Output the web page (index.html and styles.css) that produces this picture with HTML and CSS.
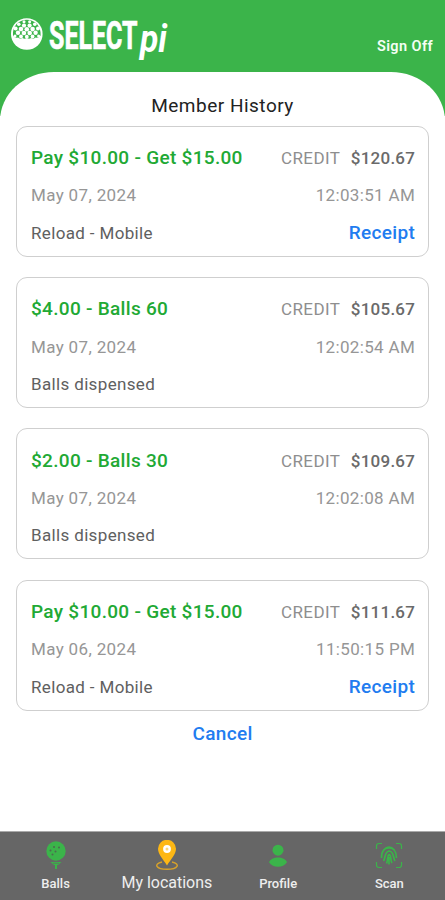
FILE: index.html
```html
<!DOCTYPE html>
<html lang="en">
<head>
<meta charset="utf-8">
<title>Member History</title>
<link rel="stylesheet" href="styles.css">
</head>
<body>
<div class="app">
  <header class="header">
    <svg class="logo" width="172" height="62" viewBox="8 4 172 62">
      <circle cx="26.800" cy="34" r="15.800" fill="#fff"/>
      <path d="M13 35.500C12.300 26 18.500 19.700 26.800 19.700S41.300 26 40.600 35.500q-2 3-5 2-2 2-4.500.5-2 1.500-4.300 0-2.300 1.500-4.300 0-2.500 1.500-4.500-.5-3 1-5-2z" fill="#3bb44a"/>
      <g fill="#fff">
        <circle cx="24" cy="21.800" r="1.500"/><circle cx="29.600" cy="21.800" r="1.500"/>
        <circle cx="18.800" cy="24.300" r="1.800"/><circle cx="34.800" cy="24.300" r="1.800"/>
        <circle cx="24" cy="25.600" r="2.100"/><circle cx="29.600" cy="25.600" r="2.100"/>
        <circle cx="15.600" cy="28.600" r="2"/><circle cx="21" cy="29.100" r="2.300"/><circle cx="26.800" cy="29.300" r="2.300"/><circle cx="32.600" cy="29.100" r="2.300"/><circle cx="38" cy="28.600" r="2"/>
        <circle cx="18" cy="32.700" r="2.200"/><circle cx="23.900" cy="33" r="2.300"/><circle cx="29.700" cy="33" r="2.300"/><circle cx="35.600" cy="32.700" r="2.200"/>
        <circle cx="15" cy="36" r="1.500"/><circle cx="21" cy="36.500" r="1.900"/><circle cx="26.800" cy="36.700" r="1.900"/><circle cx="32.600" cy="36.500" r="1.900"/><circle cx="38.600" cy="36" r="1.500"/>
      </g>
      <text class="logo-main" x="49" y="49" textLength="88.500" lengthAdjust="spacingAndGlyphs">SELECT</text>
      <text class="logo-pi" x="140" y="52" textLength="27" lengthAdjust="spacingAndGlyphs">pi</text>
    </svg>
    <a class="signoff">Sign Off</a>
  </header>
  <main class="sheet">
    <h1 class="title">Member History</h1>
    <div class="list">
      <section class="card">
        <div class="row"><span class="name">Pay $10.00 - Get $15.00</span><span class="credit">CREDIT <b class="amount">$120.67</b></span></div>
        <div class="row"><span class="date">May 07, 2024</span><span class="time">12:03:51 AM</span></div>
        <div class="row"><span class="kind">Reload - Mobile</span><a class="link">Receipt</a></div>
      </section>
      <section class="card">
        <div class="row"><span class="name">$4.00 - Balls 60</span><span class="credit">CREDIT <b class="amount">$105.67</b></span></div>
        <div class="row"><span class="date">May 07, 2024</span><span class="time">12:02:54 AM</span></div>
        <div class="row"><span class="kind">Balls dispensed</span></div>
      </section>
      <section class="card">
        <div class="row"><span class="name">$2.00 - Balls 30</span><span class="credit">CREDIT <b class="amount">$109.67</b></span></div>
        <div class="row"><span class="date">May 07, 2024</span><span class="time">12:02:08 AM</span></div>
        <div class="row"><span class="kind">Balls dispensed</span></div>
      </section>
      <section class="card">
        <div class="row"><span class="name">Pay $10.00 - Get $15.00</span><span class="credit">CREDIT <b class="amount">$111.67</b></span></div>
        <div class="row"><span class="date">May 06, 2024</span><span class="time">11:50:15 PM</span></div>
        <div class="row"><span class="kind">Reload - Mobile</span><a class="link">Receipt</a></div>
      </section>
    </div>
    <a class="link cancel">Cancel</a>
  </main>
  <nav class="tabs">
    <a class="tab">
      <svg width="32" height="32" viewBox="0 0 32 32">
        <circle cx="16" cy="11" r="9.700" fill="#3bb44a"/>
        <g fill="#4c6b4f"><circle cx="14" cy="7" r="1"/><circle cx="19" cy="7.500" r="1"/><circle cx="10.500" cy="10.500" r="1"/><circle cx="15.500" cy="11.500" r="1"/><circle cx="12.500" cy="14.500" r="1"/></g>
        <path d="M10.500 22h11l-3.500 3h-1v4h-2v-4h-1z" fill="#3bb44a"/><path d="M13 23.300h6" stroke="#666" stroke-width=".7"/>
      </svg>
      <span>Balls</span>
    </a>
    <a class="tab tab-active">
      <svg width="32" height="32" viewBox="0 0 32 32">
        <path d="M11 22c-9 2-6 7.300 5 7.300s14-5.300 5-7.300" fill="none" stroke="#d7a22b" stroke-width="1.500"/>
        <path d="M16 25.500C12 19 7 14.500 7 8.800a9 9 0 0 1 18 0C25 14.500 20 19 16 25.500z" fill="#fdb714"/>
        <circle cx="16" cy="9" r="3.900" fill="#fff"/><circle cx="16" cy="9" r="1.500" fill="#fbd77b"/>
      </svg>
      <span>My locations</span>
    </a>
    <a class="tab">
      <svg width="32" height="32" viewBox="0 0 32 32">
        <circle cx="16" cy="10.200" r="5.500" fill="#3bb44a"/>
        <path d="M7 22.300c2-6.500 16-6.500 18 0-4 6-14 6-18 0z" fill="#3bb44a"/>
      </svg>
      <span>Profile</span>
    </a>
    <a class="tab">
      <svg width="32" height="32" viewBox="0 0 32 32" fill="none" stroke="#3bb44a">
        <path d="M3.500 9V6q0-2.500 2.500-2.500h3M23 3.500h3q2.500 0 2.500 2.500v3M28.500 22v3q0 2.500-2.500 2.500h-3M9 27.500H6Q3.500 27.500 3.500 25v-3" stroke-width="1.200"/>
        <path d="M10.500 10q5.500-6 11 0M8.500 18c0-8 3.500-10 7.500-10s7.500 3 7.500 10M10.500 21c2-3 1-9 5.500-10 5 0 4 7 6 10M13.500 23.500c2-4 .5-8 2.500-9 2.500 0 1 5 3 8.500M16 17v7.500" stroke-width="1.700"/>
      </svg>
      <span>Scan</span>
    </a>
  </nav>
</div>
</body>
</html>
```
FILE: styles.css
```css
* { box-sizing: border-box; }
body { margin: 0; font-family: Roboto, "Liberation Sans", sans-serif; }
.app {
  width: 445px; height: 900px;
  display: flex; flex-direction: column;
  background: linear-gradient(#3bb44a 0 116px, #fff 116px);
  overflow: hidden;
}
.header {
  height: 72px; flex: none;
  display: flex; justify-content: space-between; align-items: flex-start;
  padding: 4px 12px 0 8px;
}
.logo { display: block; overflow: visible; }
.logo-main { font-size: 39px; font-weight: 700; fill: #fff; stroke: #fff; stroke-width: .7px; }
.logo-pi { font-size: 38px; font-weight: 700; font-style: italic; fill: #fff; }
.signoff { margin-top: 33px; font-size: 14.500px; line-height: 20px; font-weight: 600; color: #f4fff4; letter-spacing: .4px; }
.sheet {
  flex: 1; display: flex; flex-direction: column;
  background: #fff; border-radius: 54px 54px 0 0 / 49px 49px 0 0;
  padding: 21px 16px 0;
}
.title { margin: 0; height: 32.500px; line-height: 25px; text-align: center; font-size: 19px; font-weight: 400; color: #222; letter-spacing: .5px; }
.list { display: flex; flex-direction: column; gap: 20.200px; }
.card {
  height: 131.200px; padding: 12.500px 12.800px 0 14px;
  border: 1.300px solid #cfcfcf; border-radius: 11px;
}
.row { height: 37.300px; line-height: 38px; display: flex; justify-content: space-between; white-space: nowrap; }
.name { font-size: 19px; font-weight: 500; color: #21a934; letter-spacing: .3px; }
.credit { font-size: 17px; font-weight: 400; color: #8e8e8e; letter-spacing: .4px; }
.amount { margin-left: 6.200px; font-weight: 500; color: #6a6a6a; letter-spacing: .25px; }
.date, .time { font-size: 17px; font-weight: 400; color: #969696; letter-spacing: .35px; }
.kind { font-size: 17px; font-weight: 400; color: #606060; letter-spacing: .35px; }
.link { font-size: 19px; font-weight: 500; color: #217cf0; letter-spacing: .33px; }
.cancel { align-self: center; line-height: 24px; margin-top: 11px; }
.tabs {
  height: 69px; flex: none;
  display: grid; grid-template-columns: repeat(4, 111.250px);
  background: #666; border-top: 1px solid #aaa;
}
.tab { display: flex; flex-direction: column; align-items: center; padding-top: 8px; color: #eee; font-size: 13px; line-height: 23px; font-weight: 500; }
.tab-active { font-size: 16px; font-weight: 400; line-height: 21px; letter-spacing: -.03px; }
```
